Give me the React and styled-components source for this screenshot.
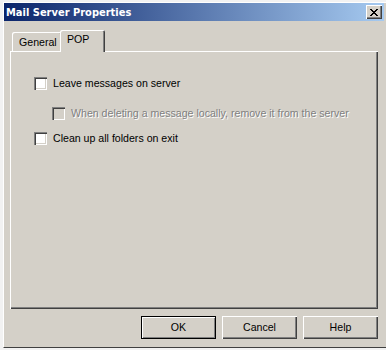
import React from "react";
import styled, { createGlobalStyle } from "styled-components";

const FONT = `"Liberation Sans", Arial, sans-serif`;
const TITLE_FONT = `"DejaVu Sans Condensed", "DejaVu Sans", "Liberation Sans", sans-serif`;

const Global = createGlobalStyle`
  html, body { margin: 0; padding: 0; }
  body {
    background: #f2f2f2;
    width: 386px;
    height: 350px;
    overflow: hidden;
    font-family: ${FONT};
    font-size: 10.6px;
  }
`;

const Desk = styled.div`
  width: 386px;
  height: 350px;
  overflow: hidden;
  padding: 2px 0 0 3px;
  box-sizing: border-box;
`;

const Window = styled.div`
  width: 384px;
  height: 346px;
  box-sizing: border-box;
  background: #d4d0c8;
  border-left: 1px solid #ffffff;
  border-top: 1px solid #ffffff;
  border-bottom: 1px solid #404040;
  display: flex;
  flex-direction: column;
`;

const TitleBar = styled.div`
  height: 18px;
  margin-right: 3px;
  background: linear-gradient(to right, #0a246a, #a6caf0);
  display: flex;
  align-items: center;
  justify-content: space-between;
  padding: 0 2px 0 2px;
`;

const TitleText = styled.span`
  color: #ffffff;
  font-weight: bold;
  font-size: 11px;
  font-family: ${TITLE_FONT};
  line-height: 13px;
`;

const CloseButton = styled.div`
  width: 16px;
  height: 14px;
  box-sizing: border-box;
  background: #d4d0c8;
  box-shadow: inset 1px 1px #ffffff, inset -1px -1px #404040, inset -2px -2px #808080;
  display: flex;
  align-items: center;
  justify-content: center;
`;

const Body = styled.div`
  padding: 9px 0 0 6px;
  display: flex;
  flex-direction: column;
`;

const TabStrip = styled.div`
  display: flex;
  align-items: flex-end;
  height: 21px;
  padding-left: 2px;
  position: relative;
  z-index: 1;
`;

const Tab = styled.div`
  box-sizing: border-box;
  width: ${(p) => p.$w}px;
  height: ${(p) => (p.$active ? 22 : 19)}px;
  margin-left: ${(p) => (p.$active ? -2 : 0)}px;
  margin-bottom: ${(p) => (p.$active ? -1 : 0)}px;
  padding: ${(p) => (p.$active ? "3px 0 0 7px" : "4px 0 0 7px")};
  background: #d4d0c8;
  border-radius: 2px 2px 0 0;
  box-shadow: inset 1px 1px #ffffff, inset -1px 0 #404040, inset -2px 0 #808080;
  color: #000;
  line-height: 13px;
  position: relative;
  z-index: ${(p) => (p.$active ? 2 : 1)};
`;

const Panel = styled.div`
  width: 368px;
  height: 258px;
  box-sizing: border-box;
  background: #d4d0c8;
  box-shadow: inset 1px 1px #ffffff, inset -1px -1px #404040, inset -2px -2px #808080;
  padding: 26px 0 0 24px;
  display: flex;
  flex-direction: column;
`;

const Row = styled.label`
  display: flex;
  align-items: center;
  height: 13px;
  margin-left: ${(p) => p.$indent || 0}px;
  margin-top: ${(p) => p.$top || 0}px;
  gap: 6px;
`;

const Box = styled.span`
  width: 13px;
  height: 13px;
  box-sizing: border-box;
  flex: none;
  background: ${(p) => (p.$disabled ? "#d4d0c8" : "#ffffff")};
  box-shadow: inset 1px 1px #808080, inset 2px 2px #404040, inset -1px -1px #ffffff,
    inset -2px -2px #d4d0c8;
`;

const Label = styled.span`
  line-height: 13px;
  white-space: nowrap;
  color: ${(p) => (p.$disabled ? "#808080" : "#000000")};
  text-shadow: ${(p) => (p.$disabled ? "1px 1px 0 #ffffff" : "none")};
`;

const ButtonRow = styled.div`
  display: flex;
  justify-content: flex-end;
  gap: 6px;
  width: 368px;
  margin-top: 7px;
`;

const Button = styled.div`
  width: 75px;
  height: 23px;
  box-sizing: border-box;
  background: #d4d0c8;
  display: flex;
  align-items: center;
  justify-content: center;
  line-height: 13px;
  color: #000;
  box-shadow: ${(p) =>
    p.$default
      ? "inset 0 0 0 1px #000000, inset 2px 2px #ffffff, inset -2px -2px #808080"
      : "inset 1px 1px #ffffff, inset -1px -1px #404040, inset -2px -2px #808080"};
`;

export default function App() {
  return (
    <>
      <Global />
      <Desk>
        <Window>
          <TitleBar>
            <TitleText>Mail Server Properties</TitleText>
            <CloseButton>
              <svg width="8" height="7" viewBox="0 0 8 7" shapeRendering="crispEdges">
                <path
                  d="M0 0h2v1h-2zM6 0h2v1h-2zM1 1h2v1h-2zM5 1h2v1h-2zM2 2h4v1h-4zM3 3h2v1h-2zM2 4h4v1h-4zM1 5h2v1h-2zM5 5h2v1h-2zM0 6h2v1h-2zM6 6h2v1h-2z"
                  fill="#000"
                />
              </svg>
            </CloseButton>
          </TitleBar>
          <Body>
            <TabStrip>
              <Tab $w={50}>General</Tab>
              <Tab $w={45} $active>
                POP
              </Tab>
            </TabStrip>
            <Panel>
              <Row>
                <Box />
                <Label>Leave messages on server</Label>
              </Row>
              <Row $indent={18} $top={17}>
                <Box $disabled />
                <Label $disabled>When deleting a message locally, remove it from the server</Label>
              </Row>
              <Row $top={12}>
                <Box />
                <Label>Clean up all folders on exit</Label>
              </Row>
            </Panel>
            <ButtonRow>
              <Button $default>OK</Button>
              <Button>Cancel</Button>
              <Button>Help</Button>
            </ButtonRow>
          </Body>
        </Window>
      </Desk>
    </>
  );
}
